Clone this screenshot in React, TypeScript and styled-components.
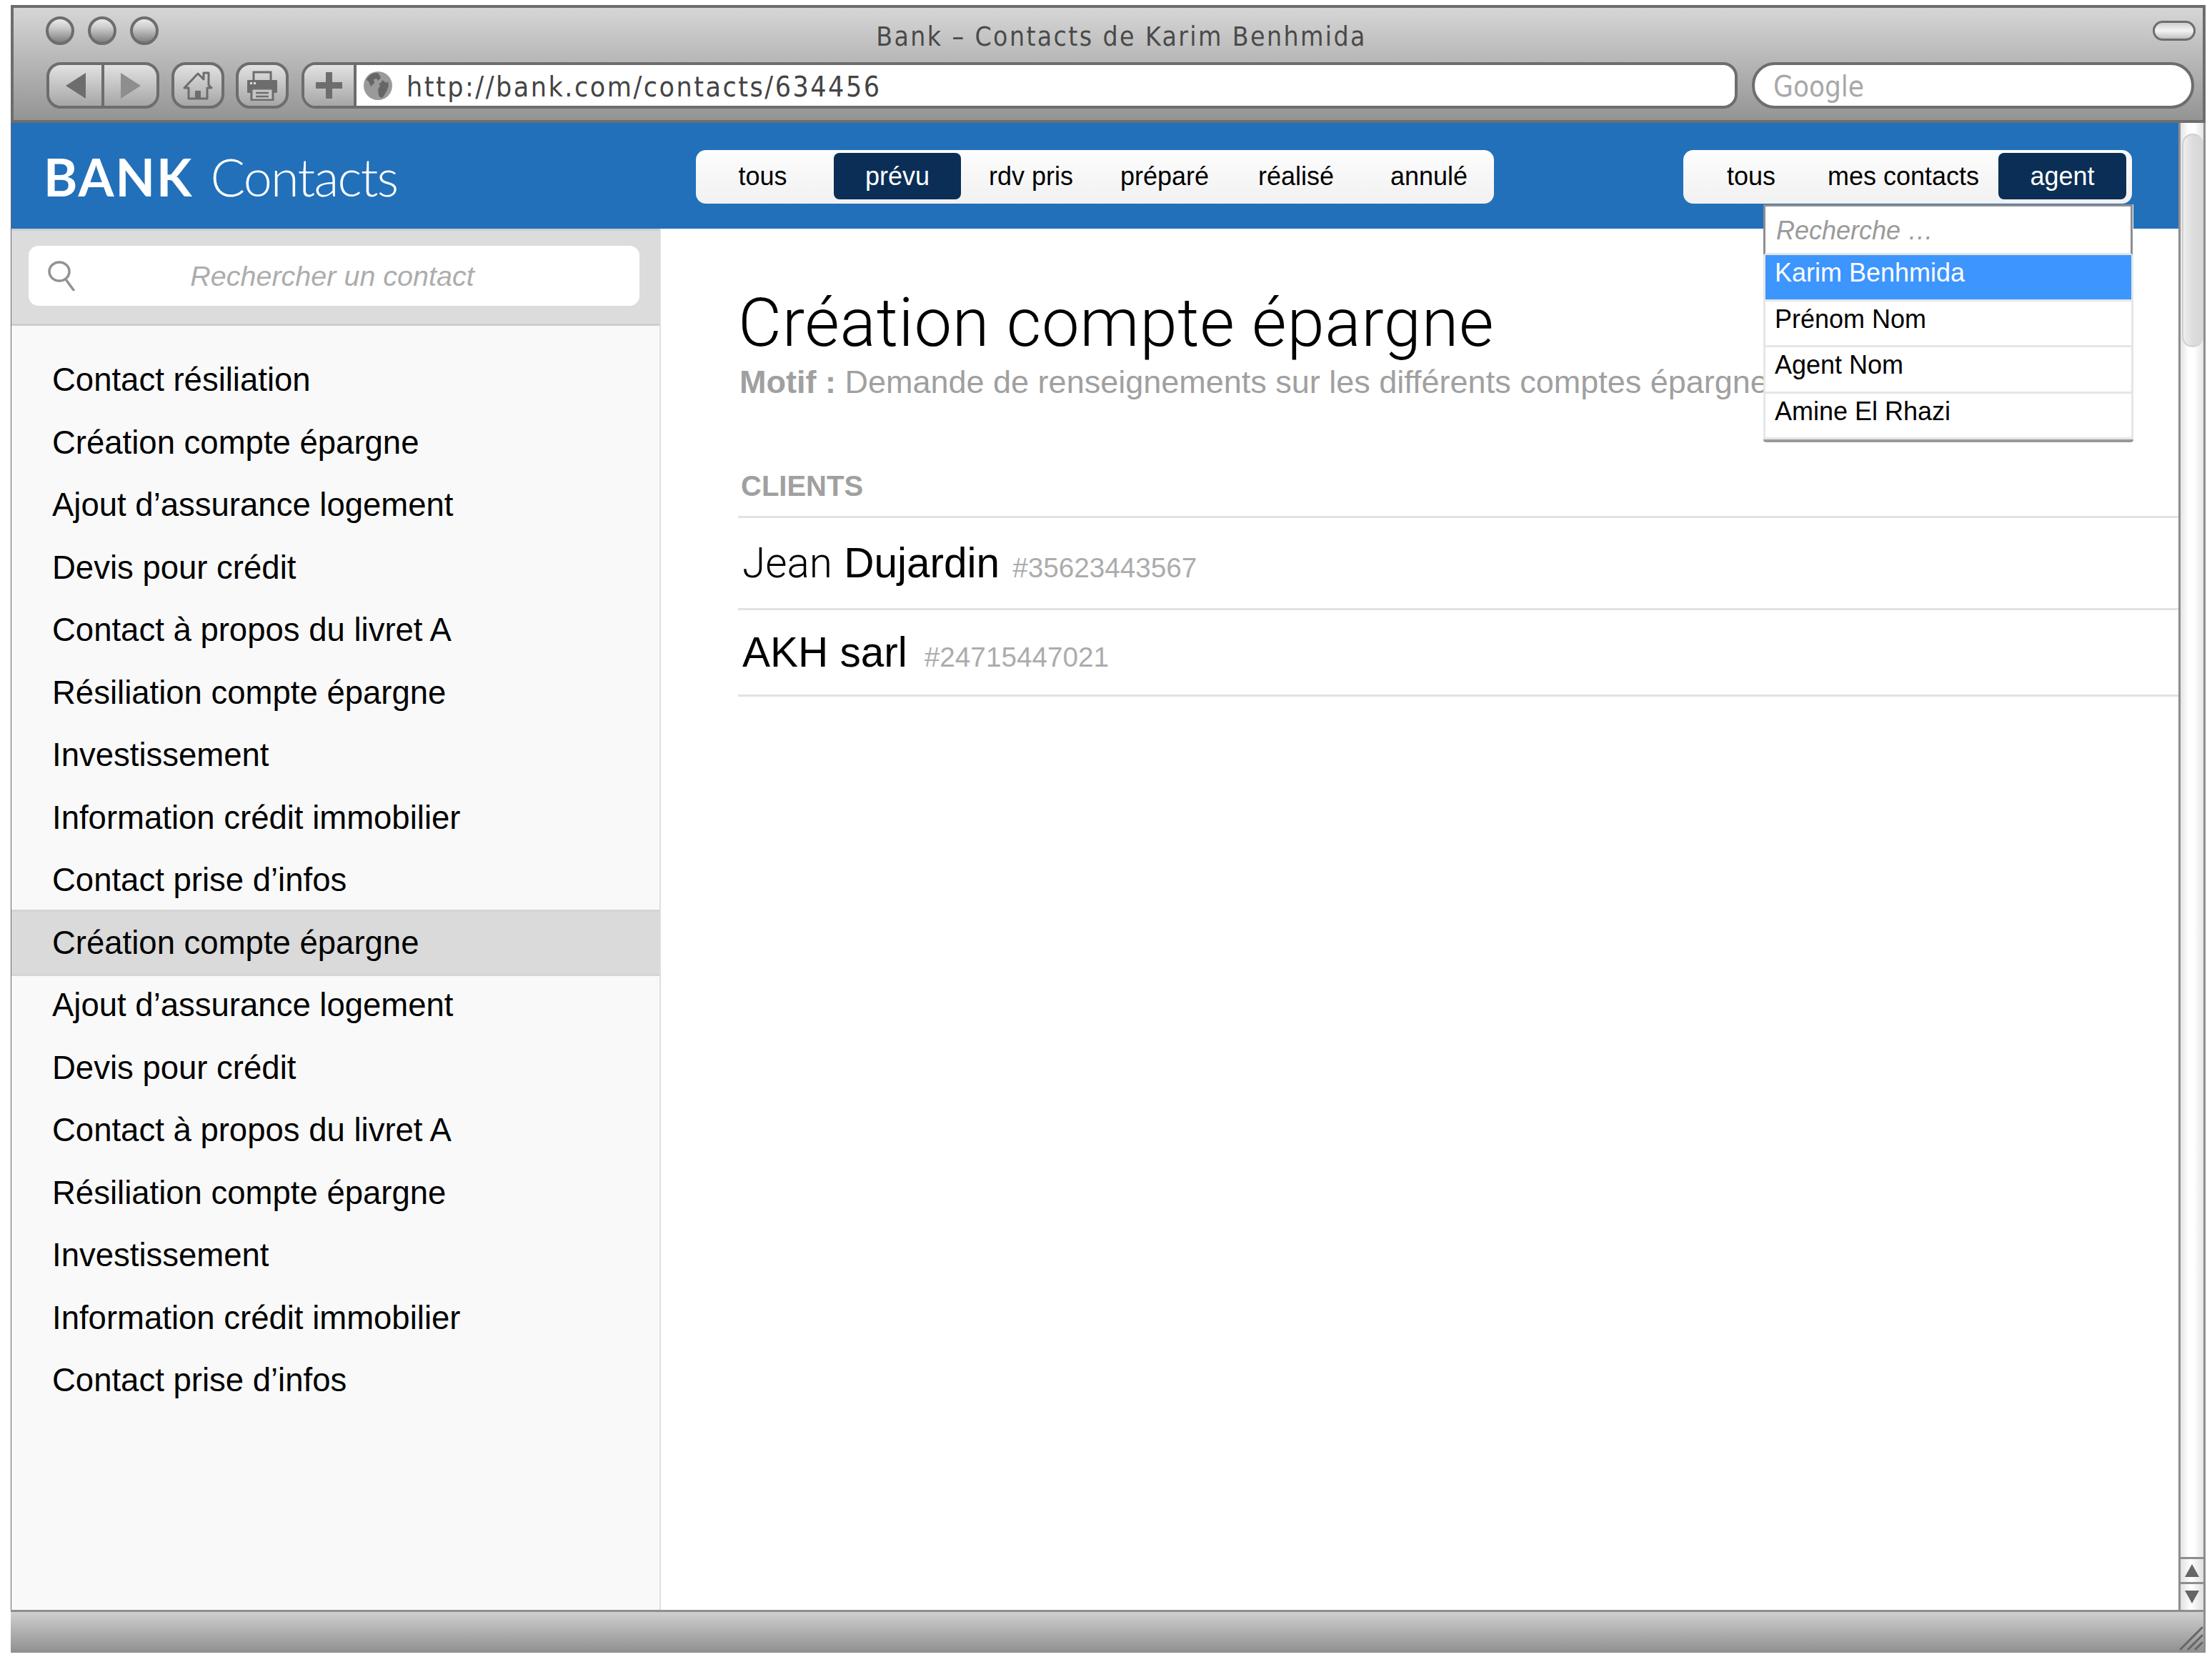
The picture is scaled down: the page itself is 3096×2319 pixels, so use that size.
import React from "react";
import styled, { createGlobalStyle } from "styled-components";

const Global = createGlobalStyle`
  html, body { margin: 0; padding: 0; background: #fff; }
  body { font-family: "Liberation Sans", Arial, sans-serif; color: #000; }
  * { box-sizing: border-box; }
`;

const Page = styled.div`
  width: 3096px;
  height: 2319px;
  padding: 7px 9px 6px 15px;
  overflow: hidden;
`;
const Win = styled.div`
  height: 100%;
  display: flex;
  flex-direction: column;
`;
const Chrome = styled.header`
  height: 165px;
  flex: none;
  border: 4px solid #6d6d6d;
  background: linear-gradient(180deg, #d6d6d6, #949494);
  display: flex;
  flex-direction: column;
`;
const TitleRow = styled.div`
  height: 76px;
  flex: none;
  display: grid;
  grid-template-columns: 1fr auto 1fr;
  padding: 12px 10px 0 45px;
`;
const Lights = styled.div`
  display: flex;
  gap: 19px;
`;
const Light = styled.span`
  width: 40px;
  height: 40px;
  border-radius: 50%;
  border: 4px solid #6d6d6d;
  background: linear-gradient(180deg, #ececec, #c8c8c8 40%, #7e7e7e);
`;
const WinTitle = styled.h1`
  margin: 0 0 0 2px;
  font: 400 37px/58px "DejaVu Sans Condensed", "DejaVu Sans", sans-serif;
  color: #4a4a4a;
  letter-spacing: 2.4px;
`;
const Zoomer = styled.span`
  justify-self: end;
  width: 60px;
  height: 28px;
  margin-top: 6px;
  border-radius: 14px;
  border: 3px solid #6d6d6d;
  background: linear-gradient(180deg, #cfcfcf, #f4f4f4 50%, #c0c0c0);
`;
const Toolbar = styled.div`
  display: flex;
  height: 65px;
  padding-left: 46px;
`;
const BtnGroup = styled.div<{ $width: number; $mr: number }>`
  flex: none;
  width: ${(p) => p.$width}px;
  margin-right: ${(p) => p.$mr}px;
  display: flex;
  border: 4px solid #6d6d6d;
  border-radius: 20px;
  overflow: hidden;
  background: linear-gradient(180deg, #e2e2e2, #a6a6a6);
`;
const ToolBtn = styled.span<{ $divider?: boolean }>`
  flex: 1;
  display: flex;
  align-items: center;
  justify-content: center;
  ${(p) => p.$divider && "border-right: 4px solid #6d6d6d;"}
`;
const UrlGroup = styled.div`
  flex: none;
  width: 2010px;
  display: flex;
  margin-right: 20px;
  border: 4px solid #6d6d6d;
  border-radius: 20px;
  overflow: hidden;
  background: #fff;
`;
const PlusBtn = styled.span`
  flex: none;
  width: 73px;
  display: flex;
  align-items: center;
  justify-content: center;
  border-right: 4px solid #6d6d6d;
  background: linear-gradient(180deg, #e2e2e2, #a6a6a6);
`;
const UrlBody = styled.div`
  flex: 1;
  display: flex;
  align-items: center;
  gap: 20px;
  padding-left: 10px;
  font: 400 39px/1 "DejaVu Sans Condensed", "DejaVu Sans", sans-serif;
  letter-spacing: 2.5px;
  color: #444;
`;
const UrlText = styled.span`
  padding-top: 3px;
`;
const SearchField = styled.div`
  flex: none;
  width: 619px;
  border: 4px solid #6d6d6d;
  border-radius: 32px;
  background: #fff;
  padding-left: 26px;
  font: 400 40px/60px "DejaVu Sans Condensed", "DejaVu Sans", sans-serif;
  color: #a8a8a8;
`;

const Main = styled.div`
  flex: 1;
  min-height: 0;
  display: flex;
  border-left: 1px solid #666;
`;
const AppArea = styled.div`
  width: 3033px;
  flex: none;
  display: flex;
  flex-direction: column;
`;
const AppHeader = styled.div`
  height: 148px;
  flex: none;
  display: flex;
  align-items: flex-start;
  padding: 38px 65px 0 45px;
  background: #2270b9;
`;
const Logo = styled.div`
  flex: none;
  width: 913px;
  margin-top: -8px;
  font: 300 72px/90px Lato, sans-serif;
  letter-spacing: -1.75px;
  color: #fff;
  b { font-weight: 700; margin-right: 24px; letter-spacing: 2px; }
`;
const Filter = styled.nav<{ $pr?: number }>`
  position: relative;
  display: flex;
  height: 75px;
  padding: 4px ${(p) => p.$pr ?? 0}px 4px 0;
  border-radius: 14px;
  background: linear-gradient(180deg, #fdfdfd, #f1f1f1);
`;
const Push = styled.div`
  flex: 1;
`;
const Segment = styled.span<{ $width: number; $active?: boolean; $ml?: number }>`
  flex: none;
  width: ${(p) => p.$width}px;
  margin-left: ${(p) => p.$ml ?? 0}px;
  height: 65px;
  text-align: center;
  font-size: 36px;
  line-height: 66px;
  border-radius: 8px;
  color: ${(p) => (p.$active ? "#fff" : "#000")};
  background: ${(p) => (p.$active ? "#0b2e56" : "transparent")};
`;
const Dropdown = styled.div`
  position: absolute;
  top: 76px;
  left: 112px;
  width: 518px;
  z-index: 3;
  background: #fff;
  border-bottom: 4px solid #999;
  border-radius: 0 0 4px 4px;
  font-size: 36px;
`;
const DropSearch = styled.div`
  height: 71px;
  width: 517px;
  border: 3px solid #8e8e8e;
  border-bottom: 3px solid #e6e6e6;
  padding-left: 15px;
  font-style: italic;
  color: #9a9a9a;
  line-height: 68px;
`;
const DropRow = styled.div<{ $on?: boolean }>`
  height: 64.5px;
  padding-left: 13px;
  line-height: 50px;
  border: 3px solid #e6e6e6;
  border-top: 0;
  color: ${(p) => (p.$on ? "#fff" : "#000")};
  background: ${(p) => (p.$on ? "#3d95fe" : "#fff")};
`;
const Columns = styled.div`
  flex: 1;
  min-height: 0;
  display: flex;
`;
const Sidebar = styled.aside`
  width: 909px;
  flex: none;
  background: #f9f9f9;
  border-right: 2px solid #dfdfdf;
`;
const SideHead = styled.div`
  height: 136px;
  padding: 21px 28px 0 24px;
  background: #dcdcdc;
  border-top: 3px solid #cdcdcd;
  border-bottom: 3px solid #cdcdcd;
`;
const SideInput = styled.div`
  height: 84px;
  border-radius: 14px;
  background: #fff;
  display: flex;
  align-items: center;
  padding-left: 27px;
  font-size: 39.5px;
  font-style: italic;
  color: #adadad;
`;
const SideInputText = styled.span`
  flex: 1;
  text-align: center;
  padding-right: 72px;
`;
const SideList = styled.ul`
  list-style: none;
  margin: 0;
  padding: 32px 0 0;
`;
const SideItem = styled.li<{ $on?: boolean }>`
  height: 87.5px;
  padding-left: 57px;
  font-size: 45.5px;
  line-height: 87px;
  white-space: nowrap;
  ${(p) => p.$on && "background: #dadada; box-shadow: 0 -3px #d5d5d5, 0 3px #d5d5d5;"}
`;
const Detail = styled.section`
  flex: 1;
  min-width: 0;
  padding: 82px 0 0 108px;
  overflow: hidden;
  white-space: nowrap;
`;
const Title = styled.h2`
  margin: 0 0 8px;
  font-family: Roboto, "Liberation Sans", sans-serif;
  font-size: 94px;
  font-weight: 300;
  line-height: 100px;
  letter-spacing: 0.7px;
`;
const Motif = styled.p`
  margin: 0 0 100px;
  font-size: 45px;
  line-height: 50px;
  color: #a0a0a0;
  padding-left: 2px;
`;
const SectionHead = styled.h3`
  margin: 0;
  padding: 0 0 22px 4px;
  font-size: 40px;
  line-height: 40px;
  font-weight: 700;
  color: #a0a0a0;
  border-bottom: 3px solid #e2e2e2;
`;
const ClientRow = styled.div<{ $h: number }>`
  height: ${(p) => p.$h + 3}px;
  padding-left: 6px;
  font-size: 58.5px;
  line-height: ${(p) => p.$h}px;
  border-bottom: 3px solid #e2e2e2;
`;
const FirstName = styled.span`
  font-family: Roboto, "Liberation Sans", sans-serif;
  font-weight: 300;
`;
const ClientRef = styled.span<{ $gap: number }>`
  margin-left: ${(p) => p.$gap}px;
  font-size: 38.7px;
  color: #acacac;
`;

const Scrollbar = styled.div`
  width: 38px;
  flex: none;
  display: flex;
  flex-direction: column;
  border-left: 3px solid #8e8e8e;
  border-right: 3px solid #8e8e8e;
  background: linear-gradient(90deg, #e4e4e4, #fff 35%, #fff 60%, #e4e4e4);
  padding-top: 15px;
`;
const Thumb = styled.div`
  height: 299px;
  margin-left: 2px;
  flex: none;
  border: 2px solid #cfcfcf;
  border-right: 0;
  border-radius: 16px;
  background: linear-gradient(90deg, #efefef, #dcdcdc 50%, #d6d6d6);
`;
const Spacer = styled.div`
  flex: 1;
`;
const ScrollBtn = styled.div<{ $h: number }>`
  height: ${(p) => p.$h}px;
  flex: none;
  display: flex;
  align-items: center;
  justify-content: center;
  border-top: 3px solid #8e8e8e;
  background: linear-gradient(90deg, #e0e0e0, #fff 45%, #dedede);
`;
const StatusBar = styled.footer`
  height: 60px;
  flex: none;
  display: flex;
  justify-content: flex-end;
  align-items: flex-end;
  border-top: 3px solid #8e8e8e;
  border-right: 3px solid #8e8e8e;
  background: linear-gradient(180deg, #cfcfcf, #8f8f8f);
`;
const GripMark = styled.svg`
  margin-bottom: 3px;
`;

const Back = ({ fill }: { fill: string }) => (
  <svg width="28" height="36" viewBox="0 0 28 36"><path d="M0 18 28 0v36z" fill={fill} /></svg>
);
const Forward = ({ fill }: { fill: string }) => (
  <svg width="28" height="36" viewBox="0 0 28 36"><path d="M28 18 0 0v36z" fill={fill} /></svg>
);
const House = () => (
  <svg width="42" height="40" viewBox="0 0 42 40" fill="none" stroke="#6d6d6d" strokeWidth="3">
    <path d="M2 23 21 3l8 8V2h7v17l4 4h-6v15H8V23z" strokeLinejoin="round" />
    <rect x="17" y="27" width="8" height="11" fill="#6d6d6d" stroke="none" />
  </svg>
);
const Printer = () => (
  <svg width="44" height="42" viewBox="0 0 44 42">
    <path d="M10 14V2h24v12" fill="none" stroke="#6d6d6d" strokeWidth="3" />
    <rect x="1" y="13" width="42" height="18" rx="1" fill="#6d6d6d" />
    <rect x="5" y="16" width="3" height="3" fill="#ddd" />
    <rect x="10" y="16" width="3" height="3" fill="#ddd" />
    <rect x="7" y="25" width="30" height="16" fill="#c6c6c6" stroke="#6d6d6d" strokeWidth="3" />
    <path d="M13 31h18M13 36h18" stroke="#6d6d6d" strokeWidth="2.5" />
  </svg>
);
const Plus = () => (
  <svg width="37" height="37" viewBox="0 0 37 37"><path d="M14 0h9v14h14v9H23v14h-9V23H0v-9h14z" fill="#6d6d6d" /></svg>
);
const Globe = () => (
  <svg width="40" height="40" viewBox="0 0 40 40">
    <circle cx="20" cy="20" r="20" fill="#9a9a9a" />
    <path d="M8 6c4-4 10-5 13-3l3 6-4 4-2-3-4 1 1 5-5 5-3-7-3-2c0-2 2-4 4-6z" fill="#666" />
    <path d="M26 12l6 4 2-2 1 6-3 8-5 8c-3 2-5 0-6-3l-1-8 3-5-2-3 3-1z" fill="#666" />
  </svg>
);
const Loupe = () => (
  <svg width="40" height="42" viewBox="0 0 40 42" fill="none" stroke="#929292">
    <ellipse cx="16" cy="15" rx="14" ry="13" strokeWidth="3.5" />
    <path d="M25 26l11 15" strokeWidth="3.5" strokeLinecap="round" />
  </svg>
);
const Grip = () => (
  <GripMark width="34" height="34" viewBox="0 0 34 34" stroke="#666" strokeWidth="3" strokeLinecap="round">
    <path d="M2 32 32 2M13 32 32 13M23 32l9-9" />
  </GripMark>
);
const TriUp = () => (
  <svg width="20" height="18" viewBox="0 0 20 18"><path d="M10 0l10 18H0z" fill="#666" /></svg>
);
const TriDown = () => (
  <svg width="20" height="18" viewBox="0 0 20 18"><path d="M10 18 20 0H0z" fill="#666" /></svg>
);

const subjects = [
  "Contact résiliation",
  "Création compte épargne",
  "Ajout d’assurance logement",
  "Devis pour crédit",
  "Contact à propos du livret A",
  "Résiliation compte épargne",
  "Investissement",
  "Information crédit immobilier",
  "Contact prise d’infos",
  "Création compte épargne",
  "Ajout d’assurance logement",
  "Devis pour crédit",
  "Contact à propos du livret A",
  "Résiliation compte épargne",
  "Investissement",
  "Information crédit immobilier",
  "Contact prise d’infos",
];
const states = [
  { label: "tous", width: 187 },
  { label: "prévu", width: 178, ml: 6, active: true },
  { label: "rdv pris", width: 196 },
  { label: "préparé", width: 178 },
  { label: "réalisé", width: 190 },
  { label: "annulé", width: 182 },
];
const scopes = [
  { label: "tous", width: 190 },
  { label: "mes contacts", width: 236 },
  { label: "agent", width: 179, ml: 15, active: true },
];
const agents = ["Karim Benhmida", "Prénom Nom", "Agent Nom", "Amine El Rhazi"];

export default function App() {
  return (
    <Page>
      <Global />
      <Win>
        <Chrome>
          <TitleRow>
            <Lights>
              <Light />
              <Light />
              <Light />
            </Lights>
            <WinTitle>Bank – Contacts de Karim Benhmida</WinTitle>
            <Zoomer />
          </TitleRow>
          <Toolbar>
            <BtnGroup $width={158} $mr={17}>
              <ToolBtn $divider><Back fill="#6d6d6d" /></ToolBtn>
              <ToolBtn><Forward fill="#8e8e8e" /></ToolBtn>
            </BtnGroup>
            <BtnGroup $width={74} $mr={16}>
              <ToolBtn><House /></ToolBtn>
            </BtnGroup>
            <BtnGroup $width={74} $mr={18}>
              <ToolBtn><Printer /></ToolBtn>
            </BtnGroup>
            <UrlGroup>
              <PlusBtn><Plus /></PlusBtn>
              <UrlBody>
                <Globe />
                <UrlText>http://bank.com/contacts/634456</UrlText>
              </UrlBody>
            </UrlGroup>
            <SearchField>Google</SearchField>
          </Toolbar>
        </Chrome>
        <Main>
          <AppArea>
            <AppHeader>
              <Logo><b>BANK</b>Contacts</Logo>
              <Filter>
                {states.map((s) => (
                  <Segment key={s.label} $width={s.width} $ml={s.ml} $active={s.active}>{s.label}</Segment>
                ))}
              </Filter>
              <Push />
              <Filter $pr={8}>
                {scopes.map((s) => (
                  <Segment key={s.label} $width={s.width} $ml={s.ml} $active={s.active}>{s.label}</Segment>
                ))}
                <Dropdown>
                  <DropSearch>Recherche …</DropSearch>
                  {agents.map((a, i) => (
                    <DropRow key={a} $on={i === 0}>{a}</DropRow>
                  ))}
                </Dropdown>
              </Filter>
            </AppHeader>
            <Columns>
              <Sidebar>
                <SideHead>
                  <SideInput>
                    <Loupe />
                    <SideInputText>Rechercher un contact</SideInputText>
                  </SideInput>
                </SideHead>
                <SideList>
                  {subjects.map((s, i) => (
                    <SideItem key={i} $on={i === 9}>{s}</SideItem>
                  ))}
                </SideList>
              </Sidebar>
              <Detail>
                <Title>Création compte épargne</Title>
                <Motif><b>Motif :</b> Demande de renseignements sur les différents comptes épargne</Motif>
                <SectionHead>CLIENTS</SectionHead>
                <ClientRow $h={126}><FirstName>Jean</FirstName> Dujardin<ClientRef $gap={18}>#35623443567</ClientRef></ClientRow>
                <ClientRow $h={118}>AKH sarl<ClientRef $gap={24}>#24715447021</ClientRef></ClientRow>
              </Detail>
            </Columns>
          </AppArea>
          <Scrollbar>
            <Thumb />
            <Spacer />
            <ScrollBtn $h={35}><TriUp /></ScrollBtn>
            <ScrollBtn $h={39}><TriDown /></ScrollBtn>
          </Scrollbar>
        </Main>
        <StatusBar><Grip /></StatusBar>
      </Win>
    </Page>
  );
}
